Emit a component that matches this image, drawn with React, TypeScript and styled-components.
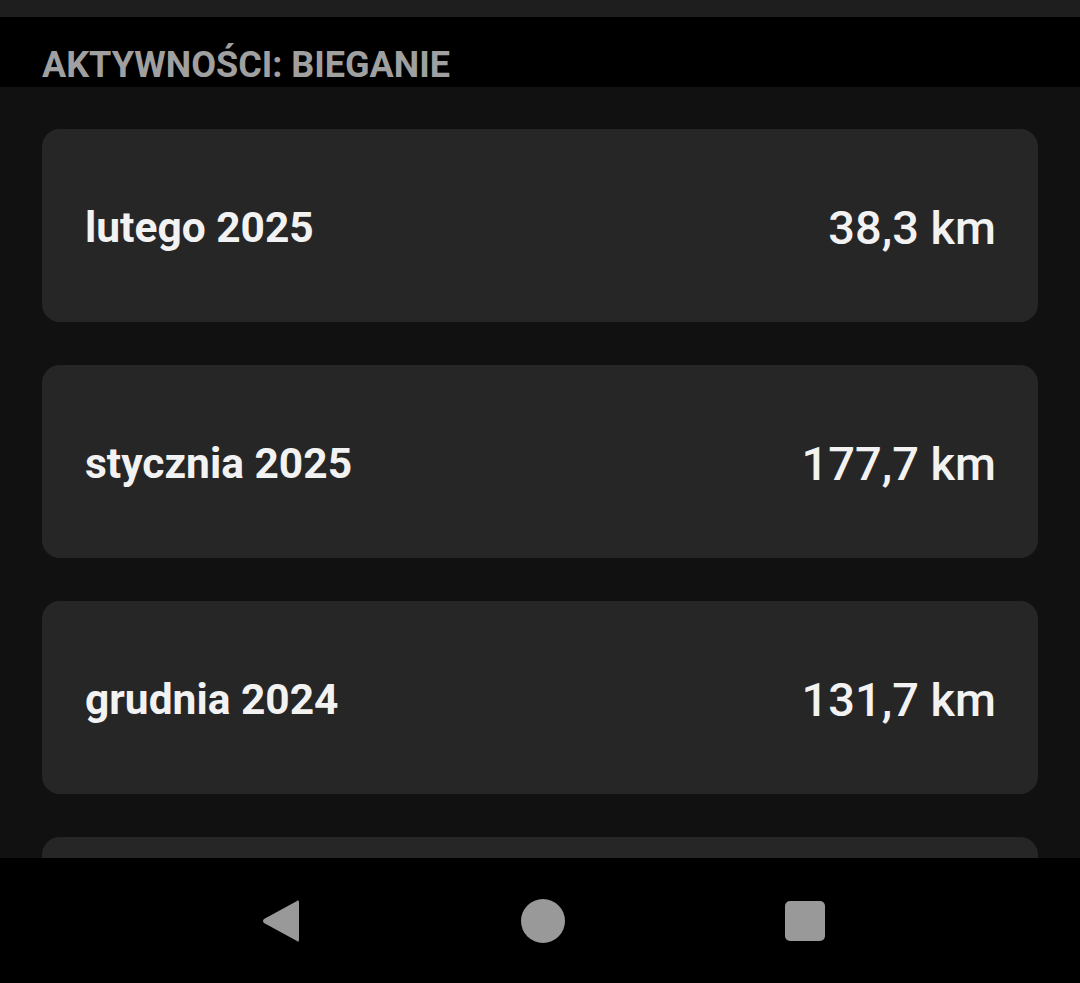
import * as React from "react";
import styled, { createGlobalStyle } from "styled-components";

const Global = createGlobalStyle`
  html, body {
    margin: 0;
    padding: 0;
    background: #111111;
  }
  body {
    font-family: Roboto, "Noto Sans", sans-serif;
  }
`;

const Screen = styled.div`
  width: 1080px;
  height: 983px;
  display: flex;
  flex-direction: column;
  background: #111111;
  overflow: hidden;
`;

const StatusStrip = styled.div`
  height: 17px;
  background: #1e1e1e;
  flex-shrink: 0;
`;

const Header = styled.div`
  height: 70px;
  background: #000;
  display: flex;
  align-items: flex-end;
  padding: 0 42px;
  flex-shrink: 0;
`;

const HeaderTitle = styled.h1`
  margin: 0 0 2px;
  font-size: 36px;
  font-weight: 700;
  line-height: 40px;
  color: #a0a0a0;
  letter-spacing: 0;
`;

const List = styled.div`
  flex: 1;
  display: flex;
  flex-direction: column;
  gap: 43px;
  padding: 42px 42px 0;
  overflow: hidden;
`;

const Card = styled.div`
  height: 193px;
  flex-shrink: 0;
  background: #262626;
  border-radius: 18px;
  display: flex;
  align-items: center;
  justify-content: space-between;
  padding: 0 42px 0 43px;
  box-sizing: border-box;
`;

const Month = styled.span`
  font-size: 42.5px;
  font-weight: 700;
  color: #f2f2f2;
  margin-top: 4px;
`;

const Distance = styled.span`
  font-size: 47px;
  font-weight: 500;
  color: #f2f2f2;
  margin-top: 4px;
`;

const NavBar = styled.div`
  height: 125px;
  background: #000;
  flex-shrink: 0;
  display: flex;
  align-items: center;
  justify-content: center;
  padding-left: 6px;
`;

const NavSlot = styled.div`
  width: 262px;
  display: flex;
  justify-content: center;
  align-items: center;
`;

const months = [
  { label: "lutego 2025", km: "38,3 km" },
  { label: "stycznia 2025", km: "177,7 km" },
  { label: "grudnia 2024", km: "131,7 km" },
  { label: "listopada 2024", km: "120,4 km" },
];

export default function App() {
  return (
    <Screen>
      <Global />
      <StatusStrip />
      <Header>
        <HeaderTitle>AKTYWNOŚCI: BIEGANIE</HeaderTitle>
      </Header>
      <List>
        {months.map((m) => (
          <Card key={m.label}>
            <Month>{m.label}</Month>
            <Distance>{m.km}</Distance>
          </Card>
        ))}
      </List>
      <NavBar>
        <NavSlot>
          <svg width="40" height="46" viewBox="0 0 40 46">
            <path
              d="M36 3 Q38 1 38 5 L38 41 Q38 45 36 43 L3 25 Q1 23 3 21 Z"
              fill="#999"
            />
          </svg>
        </NavSlot>
        <NavSlot>
          <svg width="44" height="44" viewBox="0 0 44 44">
            <circle cx="22" cy="22" r="22" fill="#999" />
          </svg>
        </NavSlot>
        <NavSlot>
          <svg width="40" height="40" viewBox="0 0 40 40">
            <rect x="0" y="0" width="40" height="40" rx="5" fill="#999" />
          </svg>
        </NavSlot>
      </NavBar>
    </Screen>
  );
}
